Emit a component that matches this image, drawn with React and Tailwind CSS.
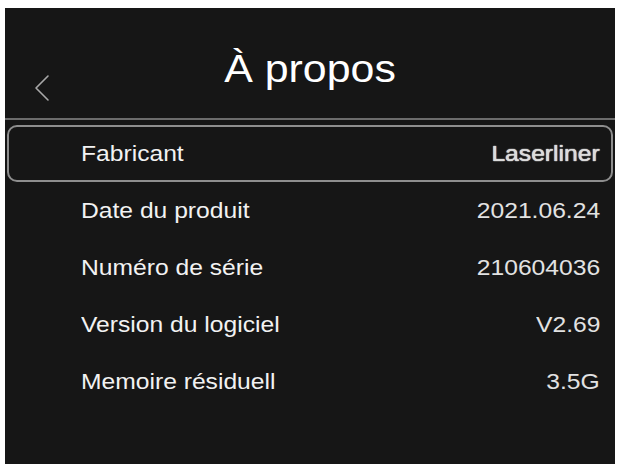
import React from 'react';

const rows = [
  { label: 'Fabricant', value: 'Laserliner', selected: true },
  { label: 'Date du produit', value: '2021.06.24' },
  { label: 'Numéro de série', value: '210604036' },
  { label: 'Version du logiciel', value: 'V2.69' },
  { label: 'Memoire résiduell', value: '3.5G' },
];

const BackIcon = () => (
  <svg width="16" height="28" viewBox="0 0 16 28" fill="none">
    <path d="M14 2 L2 14 L14 26" stroke="#a8a8a8" strokeWidth="1.6" strokeLinecap="round" strokeLinejoin="round" />
  </svg>
);

const App = () => {
  return (
    <div className="w-[620px] h-[467px] bg-white pt-[8px] pl-[5px] pr-[5px] pb-[3px]" style={{ fontFamily: '"Liberation Sans", Arial, sans-serif' }}>
      <div className="h-full bg-[#161616] flex flex-col">
        {/* header */}
        <div className="relative h-[110px] flex items-center justify-center">
          <div className="absolute left-[29px] top-[66px]">
            <BackIcon />
          </div>
          <h1 className="text-[39px] leading-none text-white scale-x-[1.1] mt-[10px]">À propos</h1>
        </div>
        <div className="h-[2px] bg-[#6c6c6c]" />

        <div className="pt-[5px] flex flex-col">
          {rows.map((row) => (
            <div
              key={row.label}
              className={`h-[57px] mx-[2px] flex items-center justify-between pl-[72px] pr-[11px] ${
                row.selected ? 'border-2 border-[#8e8e8e] rounded-[10px]' : 'border-2 border-transparent'
              }`}
            >
              <span className="text-[22px] text-[#f2f2f2] origin-left scale-x-[1.12] whitespace-nowrap">{row.label}</span>
              <span
                className={`text-[22px] origin-right scale-x-[1.12] whitespace-nowrap ${
                  row.selected ? 'text-[#dcdcdc] [text-shadow:0_0_1px_#dcdcdc,0_0_1px_#dcdcdc]' : 'text-[#e2e2e2]'
                }`}
              >
                {row.value}
              </span>
            </div>
          ))}
        </div>
      </div>
    </div>
  );
};

export default App;
